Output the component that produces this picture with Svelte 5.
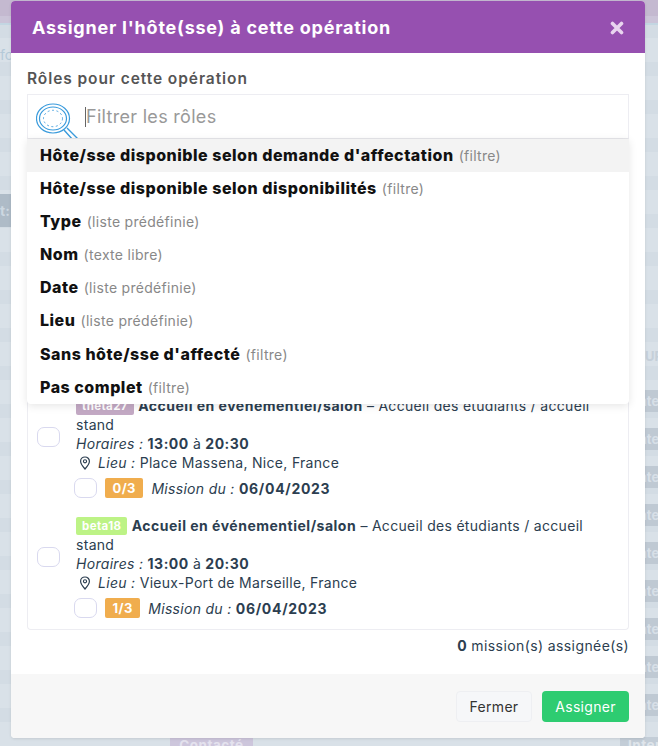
<script>
  const options = [
    { label: "Hôte/sse disponible selon demande d'affectation", hint: "(filtre)", active: true },
    { label: "Hôte/sse disponible selon disponibilités", hint: "(filtre)" },
    { label: "Type", hint: "(liste prédéfinie)" },
    { label: "Nom", hint: "(texte libre)" },
    { label: "Date", hint: "(liste prédéfinie)" },
    { label: "Lieu", hint: "(liste prédéfinie)" },
    { label: "Sans hôte/sse d'affecté", hint: "(filtre)" },
    { label: "Pas complet", hint: "(filtre)" },
  ];

  const missions = [
    { code: "theta27", color: "#c3a9c4", place: "Place Massena, Nice, France", count: "0/3" },
    { code: "beta18", color: "#bdf386", place: "Vieux-Port de Marseille, France", count: "1/3" },
  ];

  const rightRows = Array(9).fill("Inte");
</script>

<div class="page">
  <div class="topbar"></div>
  <div class="strips">
    <div class="strip left">
      <div class="fo">fo</div>
      <div class="left-chip">t:</div>
    </div>
    <div class="strip right">
      <div class="ur">UR</div>
      {#each rightRows as row}
        <div class="right-chip">{row}</div>
      {/each}
    </div>
  </div>
  <div class="contact">Contacté</div>
  <div class="inter">Inter</div>
</div>

<div class="modal">
  <header class="head">
    <h2>Assigner l'hôte(sse) à cette opération</h2>
    <svg class="close" width="14" height="14" viewBox="0 0 14 14">
      <path d="M2.5 2.5L11.5 11.5M11.5 2.5L2.5 11.5" stroke="#e9d5ef" stroke-width="3.6" stroke-linecap="round" />
    </svg>
  </header>

  <div class="body">
    <div class="label">Rôles pour cette opération</div>
    <div class="select">
      <svg class="loupe" width="44" height="37" viewBox="0 0 44 37">
        <g fill="none" stroke="#3a9bdc">
          <ellipse cx="17" cy="15.5" rx="16.5" ry="14.5" stroke-width="1.2" />
          <ellipse cx="17" cy="15.5" rx="13.5" ry="11.5" stroke-width="1.2" />
          <ellipse cx="17" cy="15.5" rx="9.5" ry="8.2" stroke-width="0.9" stroke-dasharray="2 2.5" />
          <path d="M28 27L37 37M31 25L42 36" stroke-width="1.4" />
        </g>
      </svg>
      <span class="caret"></span>
      <span class="placeholder">Filtrer les rôles</span>
    </div>

    <div class="list-wrap">
      <div class="dropdown">
        {#each options as opt}
          <div class="option" class:active={opt.active}>
            <b>{opt.label}</b> <span>{opt.hint}</span>
          </div>
        {/each}
      </div>

      <div class="list">
        {#each missions as m}
          <div class="mission">
            <span class="box"></span>
            <div class="info">
              <div class="title">
                <span class="code" style="background: {m.color}">{m.code}</span>
                <b>Accueil en événementiel/salon</b> – Accueil des étudiants / accueil stand
              </div>
              <div><i>Horaires :</i> <b>13:00</b> à <b>20:30</b></div>
              <div class="place">
                <svg width="12" height="14" viewBox="0 0 12 14">
                  <path d="M6 1C3.4 1 1.6 3 1.6 5.3C1.6 8.2 6 13 6 13C6 13 10.4 8.2 10.4 5.3C10.4 3 8.6 1 6 1Z" fill="none" stroke="#2c3e50" stroke-width="1.2" />
                  <circle cx="6" cy="5.3" r="1.6" fill="none" stroke="#2c3e50" stroke-width="1.1" />
                </svg>
                <span><i>Lieu :</i> {m.place}</span>
              </div>
              <div class="date-row">
                <span class="box round"></span>
                <span class="count">{m.count}</span>
                <span><i>Mission du :</i> <b>06/04/2023</b></span>
              </div>
            </div>
          </div>
        {/each}
      </div>
    </div>

    <div class="total"><b>0</b> mission(s) assignée(s)</div>
  </div>

  <footer class="foot">
    <button class="btn ghost">Fermer</button>
    <button class="btn green">Assigner</button>
  </footer>
</div>

<style>
  :global(body) {
    margin: 0;
    background: #d7dfe7;
    font-family: Inter, "Liberation Sans", sans-serif;
  }
  .page {
    position: relative;
    width: 658px;
    height: 746px;
    overflow: hidden;
    background: repeating-linear-gradient(#d9e1e8 0 24px, #d3dce4 24px 38px);
  }
  .topbar {
    height: 25px;
    background: linear-gradient(#c4b9d0 0 16px, #cbc4d8 16px);
    border-bottom: 2px solid #c3d6e2;
    box-sizing: border-box;
  }
  .strips {
    display: flex;
    justify-content: space-between;
    height: 721px;
  }
  .strip {
    display: flex;
    flex-direction: column;
    width: 13px;
    overflow: hidden;
  }
  .fo {
    margin-top: 21px;
    color: #b4c9d8;
    font-size: 14px;
  }
  .left-chip {
    margin-top: 131px;
    height: 33px;
    line-height: 33px;
    background: #aebbc7;
    color: #cdd8e1;
    font-size: 14px;
    font-weight: 700;
  }
  .ur {
    margin-top: 321px;
    height: 44px;
    line-height: 20px;
    color: #c5cfd9;
    font-weight: 700;
    font-size: 13px;
  }
  .right-chip {
    flex: none;
    height: 22px;
    margin-bottom: 16px;
    line-height: 22px;
    background: #bfc9d3;
    color: #d7dfe7;
    font-size: 13px;
    font-weight: 700;
    text-indent: -10px;
    white-space: nowrap;
  }
  .contact {
    position: absolute;
    left: 170px;
    top: 737px;
    width: 83px;
    box-sizing: border-box;
    text-align: center;
    background: #cdc6dc;
    color: #e4e2ee;
    font-size: 13.5px;
    font-weight: 700;
    line-height: 16px;
    letter-spacing: 0.5px;
  }
  .inter {
    position: absolute;
    left: 620px;
    top: 737px;
    width: 38px;
    padding-left: 8px;
    box-sizing: border-box;
    background: #c3cdd7;
    color: #dfe5eb;
    font-size: 13.5px;
    font-weight: 700;
    line-height: 16px;
    letter-spacing: 0.5px;
  }
  .modal {
    position: absolute;
    left: 11px;
    top: 1px;
    width: 634px;
    height: 737px;
    display: flex;
    flex-direction: column;
    border-radius: 4px;
    overflow: hidden;
    background: #fff;
    box-shadow: 0 1px 3px rgba(0, 0, 0, 0.1);
  }
  .head {
    flex: none;
    height: 52px;
    padding: 0 21px;
    display: flex;
    align-items: center;
    justify-content: space-between;
    background: #9650b0;
    color: #fff;
  }
  h2 {
    margin: 0;
    font-size: 18px;
    font-weight: 700;
    letter-spacing: 0.77px;
  }
  .close {
    margin-top: 1px;
  }
  .body {
    flex: 1;
    min-height: 0;
    padding: 17px 16px 0;
    display: flex;
    flex-direction: column;
  }
  .label {
    height: 24px;
    font-size: 15.5px;
    font-weight: 600;
    color: #555;
    line-height: 18px;
    letter-spacing: 0.92px;
  }
  .select {
    flex: none;
    height: 45px;
    display: flex;
    align-items: center;
    border: 1px solid #ededf2;
    border-bottom-color: #e6e6ea;
    overflow: hidden;
    box-sizing: border-box;
  }
  .loupe {
    flex: none;
    margin: 8px 0 0 8px;
    align-self: flex-start;
  }
  .caret {
    width: 1px;
    height: 20px;
    margin-left: 5px;
    background: #666;
  }
  .placeholder {
    font-size: 18px;
    color: #999;
    letter-spacing: 0.3px;
  }
  .list-wrap {
    position: relative;
    height: 491px;
  }
  .dropdown {
    position: absolute;
    left: 0;
    right: 0;
    top: 0;
    z-index: 2;
    background: #fff;
    border-radius: 0 0 4px 4px;
    box-shadow: 0 2px 8px rgba(0, 0, 0, 0.1);
  }
  .option {
    height: 33.1px;
    line-height: 33.1px;
    padding-left: 13px;
    font-size: 16px;
    letter-spacing: 0.52px;
    color: #111;
    white-space: nowrap;
  }
  .option.active {
    background: #f3f3f3;
  }
  .option b {
    font-weight: 800;
  }
  .option span {
    font-size: 14px;
    letter-spacing: 0.3px;
    color: #888;
  }
  .list {
    height: 100%;
    box-sizing: border-box;
    padding-bottom: 11px;
    display: flex;
    flex-direction: column;
    justify-content: flex-end;
    gap: 18px;
    overflow: hidden;
    border: 1px solid #ededf2;
    border-top: none;
    border-radius: 0 0 4px 4px;
  }
  .mission {
    display: flex;
    align-items: flex-start;
    gap: 16px;
    padding-left: 9px;
    font-size: 14px;
    letter-spacing: 0.3px;
    line-height: 19px;
    color: #2c3e50;
  }
  .box {
    flex: none;
    width: 21px;
    height: 18px;
    margin-top: 31px;
    border: 1px solid #d9d9ef;
    border-radius: 7px;
    background: #fff;
  }
  .info {
    flex: 1;
    padding-right: 14px;
  }
  .info b {
    font-weight: 700;
    letter-spacing: 0.5px;
  }
  .code {
    display: inline-block;
    padding: 0 6px;
    line-height: 18px;
    border-radius: 2px;
    color: #fff;
    font-size: 11.5px;
    font-weight: 700;
    letter-spacing: 0.4px;
    vertical-align: top;
    margin-top: 1px;
  }
  .place {
    display: flex;
    align-items: center;
    gap: 7px;
    padding-left: 3px;
  }
  .date-row {
    display: flex;
    align-items: center;
    gap: 8px;
    margin: 6px 0 0 -2px;
  }
  .date-row .box {
    margin-top: 0;
  }
  .date-row b {
    letter-spacing: 0.7px;
  }
  .count {
    padding: 0 7.5px;
    line-height: 20px;
    border-radius: 2px;
    background: #f0ad4e;
    color: #fff;
    font-size: 13px;
    font-weight: 700;
    letter-spacing: 0.4px;
  }
  .total {
    margin-top: 6px;
    text-align: right;
    font-size: 14px;
    line-height: 19px;
    letter-spacing: 0.4px;
    color: #2c3e50;
  }
  .foot {
    flex: none;
    height: 64px;
    padding-right: 16px;
    display: flex;
    align-items: center;
    justify-content: flex-end;
    gap: 10px;
    background: #f7f7f7;
  }
  .btn {
    height: 31px;
    box-sizing: border-box;
    border-radius: 4px;
    font-family: inherit;
    font-size: 14px;
    letter-spacing: 0.3px;
  }
  .ghost {
    width: 76px;
    background: #f6f7f9;
    border: 1px solid #eeeff2;
    color: #333;
  }
  .green {
    width: 87px;
    background: #2ecc71;
    border: none;
    color: #fff;
  }
</style>
